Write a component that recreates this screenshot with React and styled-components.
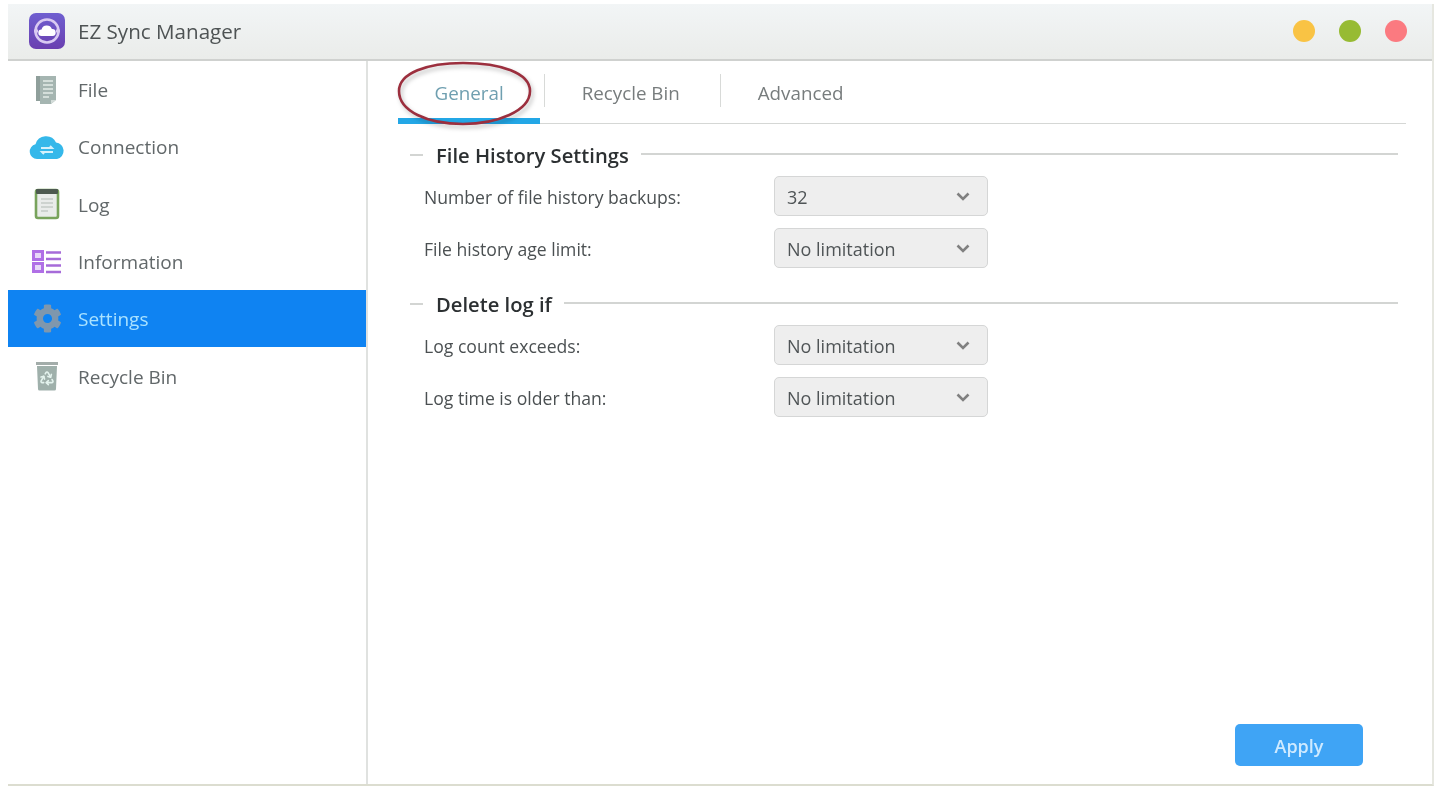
import React from "react";
import styled, { createGlobalStyle } from "styled-components";
import { FaCog } from "react-icons/fa";
import { Recycle } from "lucide-react";

const NAV_ITEMS = ["File", "Connection", "Log", "Information", "Settings", "Recycle Bin"];

const AppLogo = () => (
  <svg width="36" height="36" viewBox="0 0 36 36">
    <defs>
      <linearGradient id="logoBg" x1="0" y1="0" x2="0" y2="1">
        <stop offset="0" stopColor="#6f5fd0" />
        <stop offset="1" stopColor="#6a3fb0" />
      </linearGradient>
    </defs>
    <rect width="36" height="36" rx="7" fill="url(#logoBg)" />
    <circle cx="18" cy="18" r="11.500" fill="none" stroke="#d9c9f2" strokeWidth="2.600" />
    <path d="M5 18h4M27 18h4" stroke="#d9c9f2" strokeWidth="3" />
    <path d="M12.500 23a3.200 3.200 0 0 1 0-6.400 5.500 5.500 0 0 1 10.400-.6 3.500 3.500 0 0 1 .6 7z" fill="#fff" />
  </svg>
);

const FileIcon = () => (
  <svg width="26" height="30" viewBox="0 0 26 30">
    <rect x="2" y="1" width="5" height="25" fill="#8f9f9b" />
    <path d="M6 1h16v24l-5 4H6z" fill="#a5b5b1" />
    <path d="M9 6h10M9 10h10M9 14h10M9 18h10M9 22h6" stroke="#e3ebe8" strokeWidth="1.600" />
    <path d="M17 29v-4h5z" fill="#d3dcd9" />
  </svg>
);

const CloudIcon = () => (
  <svg width="36" height="26" viewBox="0 0 36 26">
    <path d="M8 25a7.500 7.500 0 0 1-1.500-14.800A11 11 0 0 1 27 8.600 8.300 8.300 0 0 1 28 25z" fill="#35b8ea" />
    <path d="M12 14h11l-2-2M24 18H13l2 2" fill="none" stroke="#d5f1fb" strokeWidth="2" />
  </svg>
);

const LogIcon = () => (
  <svg width="26" height="32" viewBox="0 0 26 32">
    <rect x="2" y="2" width="22" height="28" rx="2" fill="#e9ecea" stroke="#78a35c" strokeWidth="2.600" />
    <rect x="2" y="1" width="22" height="5" rx="1" fill="#4d5a50" />
    <path d="M7 11h12M7 15h12M7 19h12M7 23h7" stroke="#c4cac6" strokeWidth="1.600" />
  </svg>
);

const InfoIcon = () => (
  <svg width="30" height="24" viewBox="0 0 30 24">
    <path d="M1.500 1.500h9v8h-9zM1.500 13.500h9v8h-9z" fill="#e8d8f8" stroke="#b06fe6" strokeWidth="3" />
    <path d="M14 2.500h15M14 9h15M14 15.500h15M14 22h15" stroke="#a66bd9" strokeWidth="2.600" />
  </svg>
);

const BinIcon = () => (
  <svg width="24" height="30" viewBox="0 0 24 30">
    <rect x="1" y="1" width="22" height="3" fill="#a3adaa" />
    <path d="M2 5h20l-1 23a1.500 1.500 0 0 1-1.500 1.500h-15A1.500 1.500 0 0 1 3 28z" fill="#9fb0ab" />
    <Recycle x="4" y="9" width="16" height="16" color="#e4f3ee" strokeWidth={2.4} />
  </svg>
);

const NAV_ICONS = {
  File: <FileIcon />,
  Connection: <CloudIcon />,
  Log: <LogIcon />,
  Information: <InfoIcon />,
  Settings: <FaCog size={29} color="#7f97ad" />,
  "Recycle Bin": <BinIcon />,
};

const Chevron = () => (
  <svg width="14" height="9" viewBox="0 0 14 9">
    <path d="M1.500 1.500L7 7l5.500-5.500" fill="none" stroke="#808080" strokeWidth="2.600" />
  </svg>
);

const Field = ({ label, value }) => (
  <Row>
    <Label>{label}</Label>
    <SelectBox>
      <span>{value}</span>
      <Chevron />
    </SelectBox>
  </Row>
);

const Section = ({ title, children }) => (
  <SectionBox>
    <Legend>
      <LegendDash />
      <LegendText>{title}</LegendText>
      <LegendLine />
    </Legend>
    {children}
  </SectionBox>
);

const App = () => {
  return (
    <>
      <GlobalStyle />
      <Window>
        <TitleBar>
          <AppLogo />
          <AppTitle>EZ Sync Manager</AppTitle>
          <Dots>
            <Dot color="#f9c344" />
            <Dot color="#97bb33" />
            <Dot color="#fb7a80" />
          </Dots>
        </TitleBar>
        <Body>
          <Sidebar>
            {NAV_ITEMS.map((item) => (
              <NavRow key={item} $active={item === "Settings"}>
                <NavIcon>{NAV_ICONS[item]}</NavIcon>
                <span>{item}</span>
              </NavRow>
            ))}
          </Sidebar>
          <Content>
            <Tabs>
              <Tab $active>General</Tab>
              <TabDivider />
              <Tab>Recycle Bin</Tab>
              <TabDivider />
              <Tab>Advanced</Tab>
              <Annotation width="136" height="66" viewBox="0 0 136 66">
                <path
                  d="M66 2C104 2 133 12 133 30C133 50 100 63 66 63C30 63 2 50 2 30C2 12 30 2 66 2Z"
                  fill="none"
                  stroke="#9c2f3e"
                  strokeWidth="2.600"
                />
              </Annotation>
            </Tabs>
            <Section title="File History Settings">
              <Field label="Number of file history backups:" value="32" />
              <Field label="File history age limit:" value="No limitation" />
            </Section>
            <Section title="Delete log if">
              <Field label="Log count exceeds:" value="No limitation" />
              <Field label="Log time is older than:" value="No limitation" />
            </Section>
            <Footer>
              <ApplyButton>Apply</ApplyButton>
            </Footer>
          </Content>
        </Body>
      </Window>
    </>
  );
};

const GlobalStyle = createGlobalStyle`
  html, body {
    margin: 0;
    height: 100%;
    background: #fff;
  }
  body {
    padding: 4px 3px 1px 8px;
    box-sizing: border-box;
    font-family: "Open Sans", "Noto Sans", sans-serif;
    overflow: hidden;
  }
  #root {
    height: 100%;
  }
`;

const Window = styled.div`
  display: flex;
  flex-direction: column;
  height: 100%;
  background: #fff;
  border-right: 2px solid #e6e7e0;
  border-bottom: 2px solid #dcddd0;
  box-sizing: border-box;
  filter: blur(0.6px);
`;

const TitleBar = styled.div`
  display: flex;
  align-items: center;
  height: 57px;
  flex-shrink: 0;
  box-sizing: border-box;
  padding: 0 25px 2px 21px;
  background: linear-gradient(#f2f5f6, #eaecea);
  border-bottom: 2px solid #cfd1cf;
`;

const AppTitle = styled.div`
  margin-left: 13px;
  font-size: 20.6px;
  color: #4e5354;
`;

const Dots = styled.div`
  display: flex;
  gap: 24px;
  margin-left: auto;
`;

const Dot = styled.div`
  width: 22px;
  height: 22px;
  border-radius: 50%;
  background: ${(props) => props.color};
`;

const Body = styled.div`
  display: flex;
  flex: 1;
  min-height: 0;
`;

const Sidebar = styled.div`
  width: 358px;
  flex-shrink: 0;
  border-right: 2px solid #e0e2e0;
`;

const NavRow = styled.div`
  display: flex;
  align-items: center;
  height: 57.3px;
  font-size: 19px;
  color: ${(props) => (props.$active ? "#a9e2ff" : "#62686a")};
  background: ${(props) => (props.$active ? "#0f83f2" : "transparent")};

  span {
    padding-top: 1px;
  }
`;

const NavIcon = styled.div`
  display: flex;
  justify-content: center;
  align-items: center;
  width: 40px;
  margin: 0 11px 0 19px;
`;

const Content = styled.div`
  display: flex;
  flex-direction: column;
  flex: 1;
  min-width: 0;
`;

const Tabs = styled.div`
  position: relative;
  display: flex;
  align-items: center;
  height: 63px;
  margin: 0 26px 0 30px;
  border-bottom: 1px solid #d5d7d5;
  box-sizing: border-box;
`;

const Tab = styled.div`
  display: flex;
  align-items: center;
  align-self: stretch;
  padding: 6px 36.5px 0;
  margin-bottom: -1px;
  font-size: 18.8px;
  color: ${(props) => (props.$active ? "#6f9fb0" : "#777c7d")};
  border-bottom: 6px solid ${(props) => (props.$active ? "#23a7e6" : "transparent")};
`;

const TabDivider = styled.div`
  width: 1px;
  height: 33px;
  margin: 0 0 4px 4px;
  background: #d8dad8;
`;

const Annotation = styled.svg`
  position: absolute;
  left: -1px;
  top: 0;
  filter: drop-shadow(2px 3px 2px rgba(0, 0, 0, 0.25));
`;

const SectionBox = styled.div`
  display: flex;
  flex-direction: column;
  gap: 12px;
  margin: 18px 34px 0 42px;
  & + & {
    margin-top: 23px;
  }
`;

const Legend = styled.div`
  display: flex;
  align-items: center;
  height: 26px;
  margin-bottom: -4px;
`;

const LegendDash = styled.div`
  width: 13px;
  height: 2px;
  background: #d3d5d3;
  margin-right: 13px;
`;

const LegendText = styled.div`
  font-size: 20.2px;
  font-weight: 600;
  color: #2c3032;
  margin-right: 12px;
`;

const LegendLine = styled.div`
  flex: 1;
  height: 2px;
  background: #d3d5d3;
  margin-top: -2px;
`;

const Row = styled.div`
  display: flex;
  align-items: center;
  padding-left: 14px;
`;

const Label = styled.div`
  width: 350px;
  padding-top: 1px;
  font-size: 17.6px;
  color: #4b5052;
`;

const SelectBox = styled.div`
  display: flex;
  align-items: center;
  justify-content: space-between;
  width: 214px;
  height: 40px;
  box-sizing: border-box;
  padding: 0 17px 0 12px;
  font-size: 18px;
  color: #4f5456;
  background: #eeeeee;
  border: 1px solid #d5d6d6;
  border-radius: 5px;

  span {
    padding-top: 1px;
  }
`;

const Footer = styled.div`
  display: flex;
  justify-content: flex-end;
  margin-top: auto;
  padding: 0 69px 18px 0;
`;

const ApplyButton = styled.button`
  width: 128px;
  height: 42px;
  padding-top: 3px;
  border: none;
  border-radius: 5px;
  background: #3fa4f5;
  color: #cfeaff;
  font-family: inherit;
  font-size: 18px;
  font-weight: 600;
`;

export default App;
